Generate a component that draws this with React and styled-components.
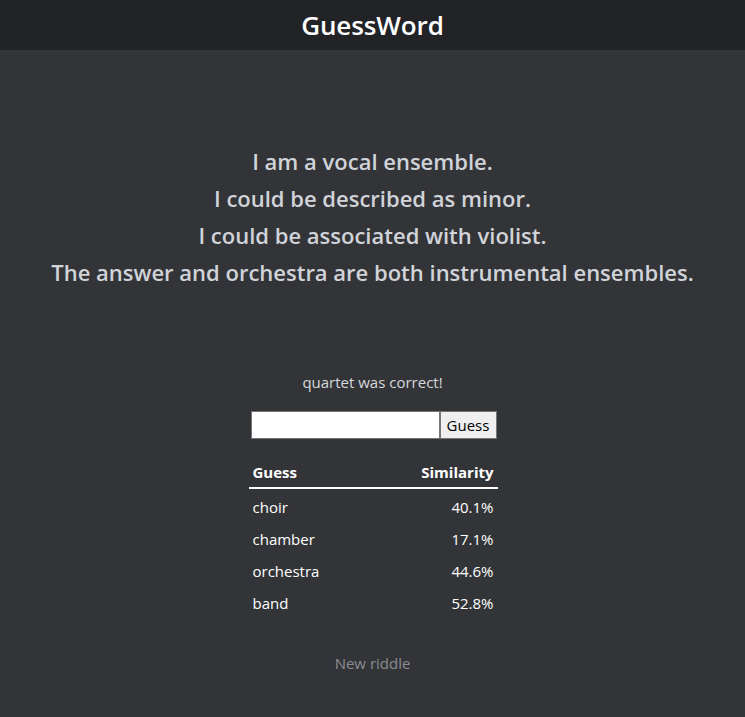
import styled, { createGlobalStyle } from 'styled-components';

const GlobalStyle = createGlobalStyle`
    body {
        margin: 0;
        background: #333438;
        font-family: "Open Sans", "Noto Sans", sans-serif;
    }
`;

const Header = styled.header`
    height: 50px;
    background: #212327;
    display: flex;
    align-items: center;
    justify-content: center;

    h1 {
        margin: 0;
        color: #ffffff;
        font-size: 26px;
        font-weight: 600;
        letter-spacing: -0.1px;
    }
`;

const Main = styled.main`
    display: flex;
    flex-direction: column;
    align-items: center;
    padding-top: 93px;
    padding-bottom: 40px;
`;

const Riddle = styled.div`
    text-align: center;
    color: #d0d3d8;
    font-size: 22px;
    font-weight: 600;
    line-height: 37px;
    margin-bottom: 81px;

    p {
        margin: 0;
    }
`;

const Status = styled.p`
    margin: 0 0 19px;
    color: #d7d9dc;
    font-size: 15px;
`;

const GuessForm = styled.form`
    display: flex;
    margin-bottom: 21px;
    padding-left: 2px;

    input {
        width: 189px;
        height: 28px;
        box-sizing: border-box;
        border: 1px solid #767676;
        background: #fff;
        margin: 0;
    }

    button {
        width: 57px;
        height: 28px;
        box-sizing: border-box;
        border: 1px solid #767676;
        background: #efefef;
        font-family: inherit;
        font-size: 15px;
        color: #000;
        padding: 0;
        margin: 0;
    }
`;

const Table = styled.table`
    width: 249px;
    margin-left: 1px;
    border-collapse: collapse;
    color: #ffffff;
    font-size: 15px;

    th {
        font-weight: 700;
        padding: 2px 4px 5px;
        border-bottom: 2px solid #ffffff;
    }

    td {
        padding: 0 4px;
        height: 32px;
    }

    tbody tr:first-child td {
        padding-top: 2px;
    }
`;

const Cell = styled.td`
    text-align: ${({ align }) => align || 'left'};
`;

const HeadCell = styled.th`
    text-align: ${({ align }) => align || 'left'};
`;

const NewRiddle = styled.button`
    margin-top: 33px;
    background: none;
    border: none;
    color: #8a8c90;
    font-family: inherit;
    font-size: 15px;
    cursor: pointer;
`;

const clues = [
    'I am a vocal ensemble.',
    'I could be described as minor.',
    'I could be associated with violist.',
    'The answer and orchestra are both instrumental ensembles.',
];

const guesses = [
    { word: 'choir', similarity: '40.1%' },
    { word: 'chamber', similarity: '17.1%' },
    { word: 'orchestra', similarity: '44.6%' },
    { word: 'band', similarity: '52.8%' },
];

export default function App() {
    return (
        <>
            <GlobalStyle />
            <Header>
                <h1>GuessWord</h1>
            </Header>
            <Main>
                <Riddle>
                    {clues.map((c) => <p key={c}>{c}</p>)}
                </Riddle>
                <Status>quartet was correct!</Status>
                <GuessForm onSubmit={(e) => e.preventDefault()}>
                    <input type="text" />
                    <button type="submit">Guess</button>
                </GuessForm>
                <Table>
                    <thead>
                        <tr>
                            <HeadCell>Guess</HeadCell>
                            <HeadCell align="right">Similarity</HeadCell>
                        </tr>
                    </thead>
                    <tbody>
                        {guesses.map((g) => (
                            <tr key={g.word}>
                                <Cell>{g.word}</Cell>
                                <Cell align="right">{g.similarity}</Cell>
                            </tr>
                        ))}
                    </tbody>
                </Table>
                <NewRiddle>New riddle</NewRiddle>
            </Main>
        </>
    );
}
